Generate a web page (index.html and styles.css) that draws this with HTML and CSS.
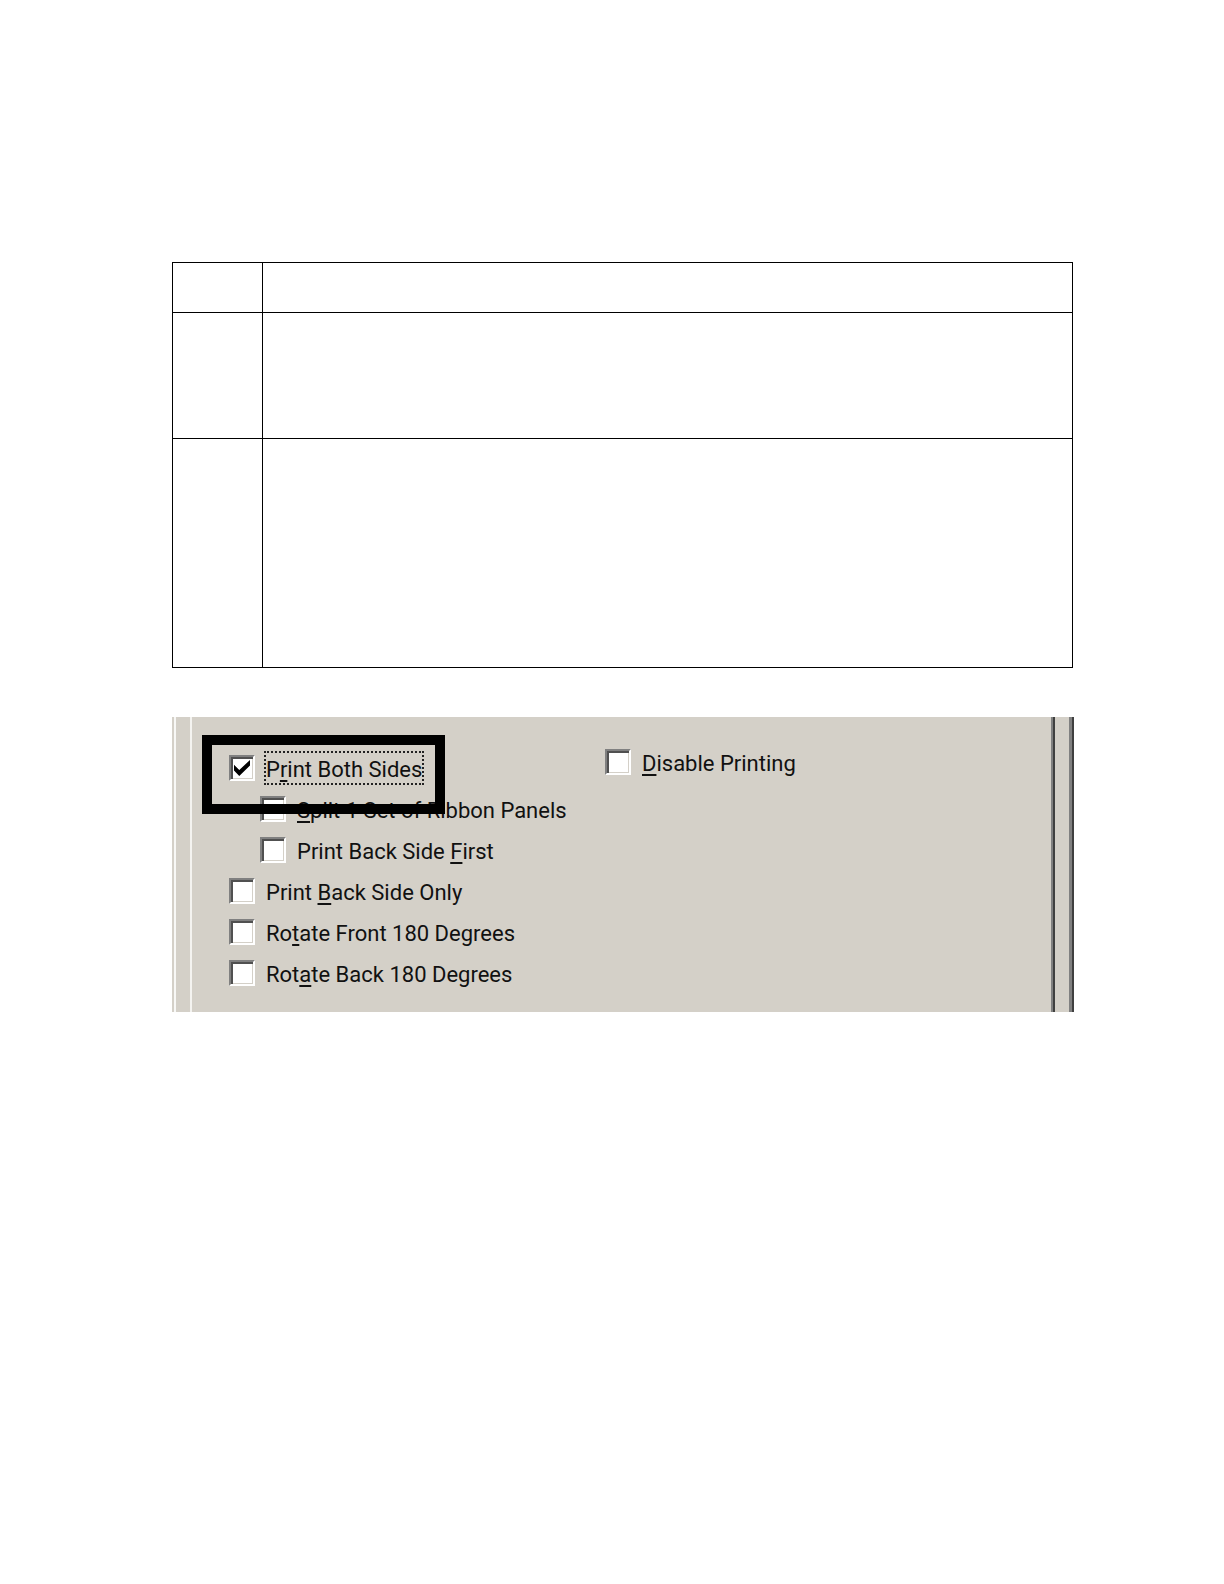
FILE: index.html
```html
<!DOCTYPE html>
<html lang="en">
<head>
    <meta charset="UTF-8">
    <meta name="viewport" content="width=device-width, initial-scale=1.0">
    <title>Print Both Sides</title>
    <link rel="stylesheet" href="styles.css">
</head>
<body>
    <main class="page">
        <table class="steps">
            <tr class="row-head"><th class="step"></th><th></th></tr>
            <tr class="row-medium"><td></td><td></td></tr>
            <tr class="row-tall"><td></td><td></td></tr>
        </table>

        <div class="window">
            <form class="tab">
                <div class="options">
                    <div class="option">
                        <input type="checkbox" id="both" checked>
                        <label for="both" class="focused">P<u>r</u>int Both Sides</label>
                        <span class="highlight"></span>
                    </div>
                    <div class="option indent">
                        <input type="checkbox" id="split">
                        <label for="split"><u>S</u>plit 1 Set of Ribbon Panels</label>
                    </div>
                    <div class="option indent">
                        <input type="checkbox" id="back-first">
                        <label for="back-first">Print Back Side <u>F</u>irst</label>
                    </div>
                    <div class="option">
                        <input type="checkbox" id="back-only">
                        <label for="back-only">Print <u>B</u>ack Side Only</label>
                    </div>
                    <div class="option">
                        <input type="checkbox" id="rotate-front">
                        <label for="rotate-front">Ro<u>t</u>ate Front 180 Degrees</label>
                    </div>
                    <div class="option">
                        <input type="checkbox" id="rotate-back">
                        <label for="rotate-back">Rot<u>a</u>te Back 180 Degrees</label>
                    </div>
                </div>
                <div class="options side">
                    <div class="option">
                        <input type="checkbox" id="disable">
                        <label for="disable"><u>D</u>isable Printing</label>
                    </div>
                </div>
            </form>
        </div>
    </main>
</body>
</html>
```
FILE: styles.css
```css
* {
    box-sizing: border-box;
}
body {
    margin: 0;
    background-color: #fff;
    font-family: Roboto, sans-serif;
    color: #111;
}
.page {
    padding: 262px 150px 0 172px;
}
.steps {
    width: calc(100% - 1px);
    border-collapse: collapse;
    table-layout: fixed;
}
.steps th,
.steps td {
    border: 1px solid #000;
    padding: 0;
}
.step {
    width: 90px;
}
.row-head {
    height: 50px;
}
.row-medium {
    height: 126px;
}
.row-tall {
    height: 229px;
}
.window {
    margin-top: 49px;
    padding: 0 13px 0 2px;
    background: linear-gradient(to right, #d4d0c8 2px, #f8f8f6 2px, #f8f8f6 4px, #d4d0c8 4px);
    border-right: 2px solid #404040;
    box-shadow: inset -3px 0 #808080;
}
.tab {
    display: grid;
    grid-template-columns: 376px 1fr;
    margin-left: 16px;
    margin-right: 4px;
    padding: 38px 0 26px 37px;
    border-left: 2px solid #f4f3f0;
    border-right: 2px solid #404040;
    box-shadow: inset -2px 0 #808080;
}
.options {
    display: flex;
    flex-direction: column;
    gap: 15px;
}
.side {
    margin-top: -6px;
}
.option {
    position: relative;
    display: flex;
    align-items: center;
    gap: 11px;
    height: 26px;
}
.indent {
    margin-left: 31px;
}
.option label {
    padding-top: 4px;
    font-size: 22px;
    line-height: 26px;
    white-space: nowrap;
}
.option u {
    text-decoration-thickness: 2px;
    text-underline-offset: 3px;
    text-decoration-skip-ink: none;
}
.focused {
    outline: 2px dotted #222;
}
input[type="checkbox"] {
    appearance: none;
    flex: none;
    display: grid;
    place-items: center;
    width: 26px;
    height: 26px;
    margin: 0;
    background-color: #fff;
    border: 2px solid;
    border-color: #808080 #fff #fff #808080;
    box-shadow: inset 2px 2px #505050, inset -1px -1px #d4d0c8;
}
input[type="checkbox"]:checked::before {
    content: "";
    width: 16px;
    height: 16px;
    background-color: #000;
    clip-path: polygon(0 30%, 33% 62%, 100% 0, 100% 34%, 33% 100%, 0 66%);
}
/* black box drawn over the rows */
.highlight {
    position: absolute;
    top: -20px;
    left: -27px;
    width: 243px;
    height: 79px;
    border: 10px solid #000;
    pointer-events: none;
    z-index: 1;
}
```
